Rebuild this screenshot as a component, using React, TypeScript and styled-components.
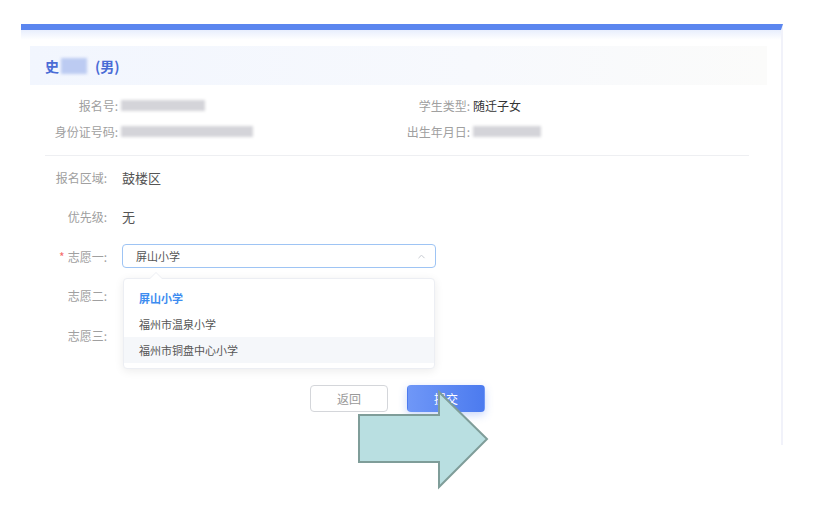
import React from 'react'
import styled, { createGlobalStyle } from 'styled-components'
import { ChevronUp } from 'lucide-react'

const GlobalStyle = createGlobalStyle`
  html, body {
    margin: 0;
    padding: 0;
    background: #ffffff;
  }
  body {
    font-family: "Noto Sans CJK SC", "Noto Sans", sans-serif;
    color: #555;
  }
`

const Page = styled.div`
  position: relative;
  width: 819px;
  height: 518px;
  padding: 24px 0 0 21px;
  box-sizing: border-box;
  overflow: hidden;
`

const Card = styled.div`
  position: relative;
  width: 762px;
  height: 421px;
  box-sizing: border-box;
  border-top: 6px solid #5b86ef;
  border-right: 2px solid #f1f2fa;
  background: #fff;
  padding: 16px 14px 0 9px;

  &::before {
    content: '';
    position: absolute;
    left: 0;
    right: 0;
    top: 0;
    height: 10px;
    background: linear-gradient(180deg, rgba(91, 134, 239, 0.14), rgba(91, 134, 239, 0));
    pointer-events: none;
  }
`

const Header = styled.div`
  height: 39px;
  display: flex;
  align-items: center;
  padding-left: 15px;
  background: linear-gradient(90deg, #f2f6fe 0%, #f7f9fd 60%, #fbfbfa 100%);
  font-size: 14px;
  font-weight: bold;
  color: #4a6cd6;
`

const NameBlur = styled.span`
  display: inline-block;
  width: 26px;
  height: 16px;
  margin: 0 8px 0 2px;
  background: #bccbf2;
  filter: blur(1.5px);
`

const InfoGrid = styled.div`
  display: grid;
  grid-template-columns: 352px 1fr;
  margin-top: 7px;
`

const InfoCell = styled.div`
  display: flex;
  align-items: center;
  height: 26px;
  font-size: 12px;
`

const InfoLabel = styled.span`
  width: 88px;
  text-align: right;
  color: #a0a0a0;
`

const InfoValue = styled.span`
  margin-left: 3px;
  color: #333;
`

const Redacted = styled.span<{ $w: number }>`
  display: inline-block;
  margin-left: 3px;
  width: ${(p) => p.$w}px;
  height: 11px;
  background: #d4d4d9;
  filter: blur(1.8px);
`

const Divider = styled.div`
  height: 1px;
  margin: 11px 18px 0 15px;
  background: #eeeff2;
`

const Form = styled.div`
  display: flex;
  flex-direction: column;
  gap: 15.5px;
  margin-top: 9px;
`

const Row = styled.div`
  display: flex;
  align-items: center;
  height: 24px;
`

const Label = styled.div`
  width: 92px;
  box-sizing: border-box;
  padding-right: 15px;
  text-align: right;
  font-size: 12px;
  color: #a0a0a0;
`

const Star = styled.span`
  color: #f56c6c;
  margin-right: 3px;
`

const Value = styled.div`
  font-size: 13px;
  color: #555;
`

const SelectWrap = styled.div`
  position: relative;
  width: 314px;
`

const SelectBox = styled.div`
  height: 24px;
  box-sizing: border-box;
  border: 1px solid #9ec4f4;
  border-radius: 4px;
  display: flex;
  align-items: center;
  justify-content: space-between;
  padding: 0 8px 0 13px;
  font-size: 11px;
  color: #555;
  background: #fff;
`

const Dropdown = styled.ul`
  position: absolute;
  top: 34px;
  left: 1px;
  width: 312px;
  margin: 0;
  padding: 6px 0 5px;
  list-style: none;
  box-sizing: border-box;
  background: #fff;
  border: 1px solid #eceef3;
  border-radius: 4px;
  box-shadow: 0 2px 10px rgba(0, 0, 0, 0.08);
  z-index: 2;

  &::before {
    content: '';
    position: absolute;
    top: -6px;
    left: 26px;
    border: 6px solid transparent;
    border-top: 0;
    border-bottom-color: #fff;
    filter: drop-shadow(0 -1px 0 #eceef3);
  }
`

const Option = styled.li<{ $selected?: boolean; $hover?: boolean }>`
  height: 26px;
  line-height: 26px;
  padding-left: 15px;
  font-size: 11px;
  color: ${(p) => (p.$selected ? '#3d8cf0' : '#555')};
  font-weight: ${(p) => (p.$selected ? 'bold' : 'normal')};
  background: ${(p) => (p.$hover ? '#f5f7fa' : 'transparent')};
`

const Buttons = styled.div`
  display: flex;
  gap: 19px;
  margin: 38px 0 0 280px;
`

const Button = styled.button<{ $primary?: boolean }>`
  width: 78px;
  height: 27px;
  border-radius: 4px;
  font-family: inherit;
  font-size: 12px;
  cursor: pointer;
  border: 1px solid ${(p) => (p.$primary ? 'transparent' : '#d4d6da')};
  color: ${(p) => (p.$primary ? '#fff' : '#999')};
  background: ${(p) =>
    p.$primary ? 'linear-gradient(90deg, #6f97f7 0%, #4c7bef 100%)' : '#fff'};
  box-shadow: ${(p) => (p.$primary ? '0 3px 8px rgba(76, 123, 239, 0.3)' : 'none')};
`

const ArrowShape = styled.svg`
  position: absolute;
  left: 355px;
  top: 388px;
  overflow: visible;
`

const choices = ['屏山小学', '福州市温泉小学', '福州市铜盘中心小学']

const App = () => {
  return (
    <>
      <GlobalStyle />
      <Page>
        <Card>
          <Header>
            史<NameBlur />(男)
          </Header>
          <InfoGrid>
            <InfoCell>
              <InfoLabel>报名号:</InfoLabel>
              <Redacted $w={84} />
            </InfoCell>
            <InfoCell>
              <InfoLabel>学生类型:</InfoLabel>
              <InfoValue>随迁子女</InfoValue>
            </InfoCell>
            <InfoCell>
              <InfoLabel>身份证号码:</InfoLabel>
              <Redacted $w={132} />
            </InfoCell>
            <InfoCell>
              <InfoLabel>出生年月日:</InfoLabel>
              <Redacted $w={68} />
            </InfoCell>
          </InfoGrid>
          <Divider />
          <Form>
            <Row>
              <Label>报名区域:</Label>
              <Value>鼓楼区</Value>
            </Row>
            <Row>
              <Label>优先级:</Label>
              <Value>无</Value>
            </Row>
            <Row>
              <Label>
                <Star>*</Star>志愿一:
              </Label>
              <SelectWrap>
                <SelectBox>
                  屏山小学
                  <ChevronUp size={11} color="#c0c4cc" strokeWidth={2} />
                </SelectBox>
                <Dropdown>
                  {choices.map((c, i) => (
                    <Option key={c} $selected={i === 0} $hover={i === 2}>
                      {c}
                    </Option>
                  ))}
                </Dropdown>
              </SelectWrap>
            </Row>
            <Row>
              <Label>志愿二:</Label>
            </Row>
            <Row>
              <Label>志愿三:</Label>
            </Row>
          </Form>
          <Buttons>
            <Button>返回</Button>
            <Button $primary>提交</Button>
          </Buttons>
        </Card>
        <ArrowShape width="140" height="104" viewBox="355 388 140 104">
          <polygon
            points="359,415 439,415 439,392 487,439 439,487 439,462 359,462"
            fill="#b9dfe1"
            stroke="#7f9d99"
            strokeWidth="2"
          />
        </ArrowShape>
      </Page>
    </>
  )
}

export default App
